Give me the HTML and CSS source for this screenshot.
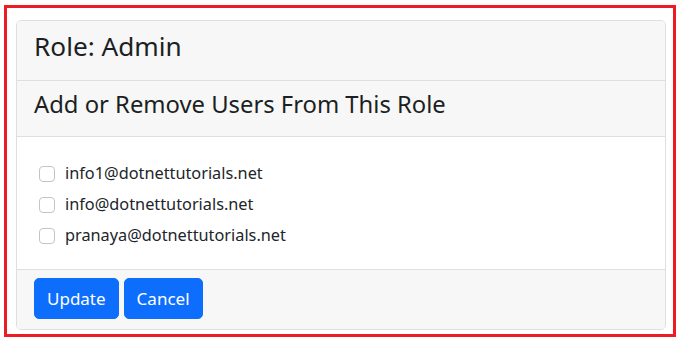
FILE: index.html
```html
<!DOCTYPE html>
<html lang="en">
<head>
<meta charset="utf-8">
<title>Role: Admin</title>
<link rel="stylesheet" href="styles.css">
</head>
<body>
<div class="frame">
  <div class="card">
    <div class="card-header head-role"><h3 class="title title-role">Role: Admin</h3></div>
    <div class="card-header head-users"><h3 class="title title-users">Add or Remove Users From This Role</h3></div>
    <div class="card-body">
      <label class="check"><input class="box" type="checkbox"><span class="check-label">info1@dotnettutorials.net</span></label>
      <label class="check"><input class="box" type="checkbox"><span class="check-label">info@dotnettutorials.net</span></label>
      <label class="check"><input class="box" type="checkbox"><span class="check-label">pranaya@dotnettutorials.net</span></label>
    </div>
    <div class="card-footer">
      <button class="btn" type="submit">Update</button>
      <button class="btn" type="button">Cancel</button>
    </div>
  </div>
</div>
</body>
</html>
```
FILE: styles.css
```css
html, body {
  margin: 0;
  background: #ffffff;
}
body {
  font-family: "Noto Sans", "Open Sans", sans-serif;
  color: #212529;
}
.frame {
  margin: 5px 6px 5px 4px;
  border: 3px solid #ed1c24;
  padding: 12px 7px 4px 9px;
}
.card {
  border: 1px solid #dfdfdf;
  border-radius: 5px;
  overflow: hidden;
  background: #ffffff;
}
.card-header {
  background: #f7f7f7;
  border-bottom: 1px solid #dfdfdf;
  padding: 0 17px;
}
.head-role {
  padding-top: 9px;
  padding-bottom: 17px;
}
.head-users {
  padding-top: 7px;
  padding-bottom: 15px;
}
.title {
  margin: 0;
  font-weight: 400;
  line-height: 33px;
  color: #1c1f23;
}
.title-role {
  font-size: 26.2px;
}
.title-users {
  font-size: 23.8px;
}
.card-body {
  padding: 21px 22px 18px;
  display: flex;
  flex-direction: column;
}
.check {
  display: flex;
  align-items: center;
  height: 31px;
  font-size: 16.3px;
  line-height: 31px;
}
.box {
  appearance: none;
  -webkit-appearance: none;
  margin: 0 10px 0 0;
  width: 16px;
  height: 16px;
  border: 1px solid #c4c4c4;
  border-radius: 4px;
  background: #ffffff;
  flex: none;
}
.card-footer {
  background: #f7f7f7;
  border-top: 1px solid #dfdfdf;
  padding: 8px 17px 10px;
  display: flex;
  gap: 5px;
}
.btn {
  font-family: inherit;
  font-size: 17px;
  line-height: 39px;
  height: 41px;
  padding: 0 12px;
  border: 1px solid #0d6efd;
  border-radius: 5px;
  background: #0d6efd;
  color: #ffffff;
}
```
